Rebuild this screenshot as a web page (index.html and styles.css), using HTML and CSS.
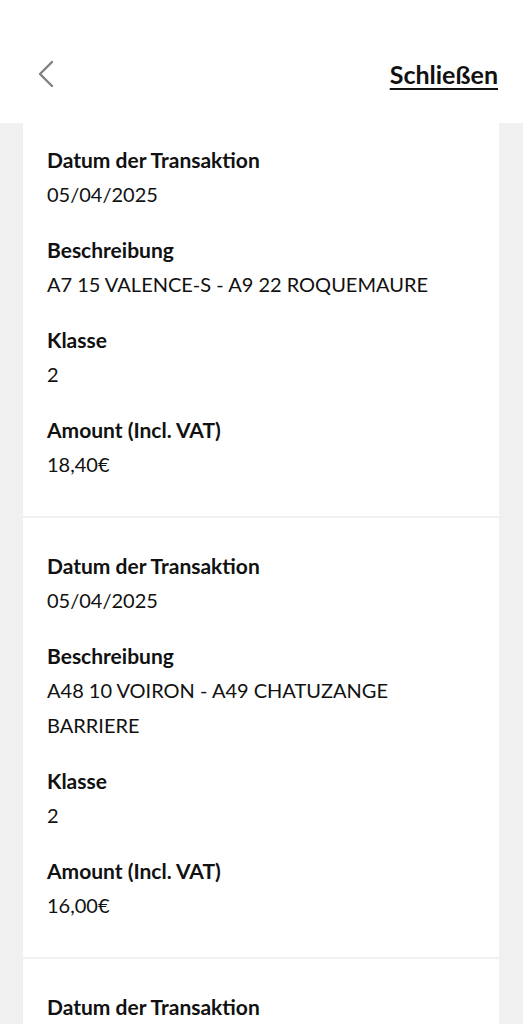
FILE: index.html
```html
<!DOCTYPE html>
<html lang="de">
<head>
  <meta charset="UTF-8">
  <meta name="viewport" content="width=device-width, initial-scale=1.0">
  <title>Transaktionen</title>
  <link rel="stylesheet" href="styles.css">
</head>
<body>
  <header class="top-bar">
    <button class="back" aria-label="Zurück">
      <svg width="18" height="28" viewBox="0 0 18 28">
        <path d="M15 2 L3 14 L15 26" fill="none" stroke="#808080" stroke-width="2.4" stroke-linecap="round" stroke-linejoin="round"/>
      </svg>
    </button>
    <a class="close" href="#">Schließen</a>
  </header>

  <main class="list">
    <section class="card card--scrolled">
      <div class="field">
        <div class="label">Datum der Transaktion</div>
        <div class="value">05/04/2025</div>
      </div>
      <div class="field">
        <div class="label">Beschreibung</div>
        <div class="value">A7 15 VALENCE-S - A9 22 ROQUEMAURE</div>
      </div>
      <div class="field">
        <div class="label">Klasse</div>
        <div class="value">2</div>
      </div>
      <div class="field">
        <div class="label">Amount (Incl. VAT)</div>
        <div class="value">18,40€</div>
      </div>
    </section>

    <section class="card">
      <div class="field">
        <div class="label">Datum der Transaktion</div>
        <div class="value">05/04/2025</div>
      </div>
      <div class="field">
        <div class="label">Beschreibung</div>
        <div class="value">A48 10 VOIRON - A49 CHATUZANGE BARRIERE</div>
      </div>
      <div class="field">
        <div class="label">Klasse</div>
        <div class="value">2</div>
      </div>
      <div class="field">
        <div class="label">Amount (Incl. VAT)</div>
        <div class="value">16,00€</div>
      </div>
    </section>

    <section class="card">
      <div class="field">
        <div class="label">Datum der Transaktion</div>
        <div class="value">05/04/2025</div>
      </div>
    </section>
  </main>
</body>
</html>
```

FILE: styles.css
```css
* {
  box-sizing: border-box;
}

html,
body {
  height: 100%;
}

body {
  margin: 0;
  font-family: "Lato", "Noto Sans", sans-serif;
  color: #111;
  background: #fff;
  display: flex;
  flex-direction: column;
  overflow: hidden;
}

.top-bar {
  height: 123px;
  flex: none;
  display: flex;
  align-items: center;
  justify-content: space-between;
  padding: 24px 25px 0 37px;
  background: #fff;
}

.back {
  border: 0;
  background: none;
  padding: 0;
  display: flex;
}

.close {
  font-size: 25px;
  font-weight: 700;
  color: #111;
  text-decoration: underline;
  text-underline-offset: 4px;
  text-decoration-thickness: 2px;
}

.list {
  flex: 1;
  overflow: hidden;
  background: #f0f0f0;
  padding: 0 24px 0 23px;
  display: flex;
  flex-direction: column;
  gap: 2px;
}

.card {
  background: #fff;
  padding: 30px 24px 34px;
  display: flex;
  flex-direction: column;
  gap: 20px;
}

.card--scrolled {
  padding-top: 19px;
}

.label {
  font-size: 21px;
  font-weight: 700;
  line-height: 35px;
}

.value {
  font-size: 20px;
  line-height: 35px;
}
```
